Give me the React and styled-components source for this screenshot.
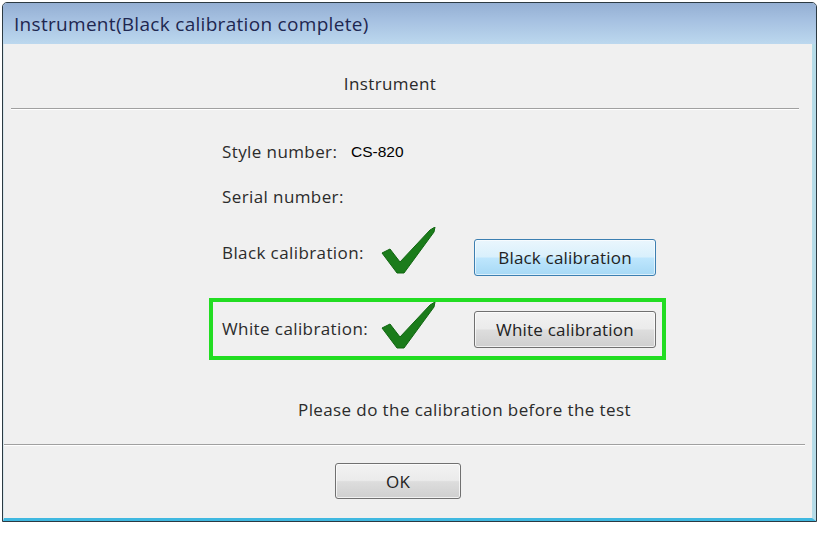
import React from "react";
import styled, { createGlobalStyle } from "styled-components";

const Global = createGlobalStyle`
  html, body { margin: 0; padding: 0; background: #ffffff; }
  body { font-family: "Open Sans", "Liberation Sans", sans-serif; }
`;

const Window = styled.div`
  margin: 2px 0 0 2px;
  width: 815px;
  height: 520px;
  box-sizing: border-box;
  border: 1px solid #2c3a42;
  border-radius: 5px 5px 0 0;
  display: flex;
  flex-direction: column;
  background: #f0f0f0;
  overflow: hidden;
`;

const TitleBar = styled.div`
  height: 41px;
  flex: 0 0 auto;
  background: linear-gradient(to bottom, #94afd3 0%, #a7c2e2 45%, #bcd8ee 100%);
  display: flex;
  align-items: center;
  padding-left: 11px;
  font-size: 19px;
  color: #1e2750;
  letter-spacing: 0.3px;
`;

const Body = styled.div`
  flex: 1;
  display: flex;
  flex-direction: column;
  border-right: 4px solid #b6dce8;
  border-bottom: 3px solid #3fb8e0;
  border-left: 1px solid #d8e6ec;
`;

const Header = styled.div`
  height: 64px;
  box-sizing: border-box;
  padding: 29px 0 0 0;
  text-align: center;
  font-size: 17px;
  letter-spacing: 0.4px;
  line-height: 22px;
  color: #2a2a2a;
  margin-right: 36px;
`;

const Separator = styled.div`
  height: 1px;
  background: #a0a0a0;
  border-bottom: 1px solid #ffffff;
  margin: 0 ${p => p.$right}px 0 ${p => p.$left}px;
`;

const Form = styled.div`
  display: flex;
  flex-direction: column;
  padding-left: 205px;
`;

const Row = styled.div`
  display: flex;
  align-items: flex-start;
  height: ${p => p.$h}px;
  margin-top: ${p => p.$mt}px;
  padding-left: 13px;
`;

const Label = styled.div`
  width: ${p => p.$w || 159}px;
  flex: 0 0 auto;
  margin-top: ${p => p.$mt || 0}px;
  font-size: 17px;
  letter-spacing: 0.4px;
  line-height: 28px;
  color: #2b2b2b;
  white-space: nowrap;
`;

const Value = styled.div`
  font-family: "Liberation Sans", Arial, sans-serif;
  font-size: 15.5px;
  line-height: 28px;
  color: #000;
  margin-left: 12px;
`;

const CheckBox = styled.div`
  width: 93px;
  flex: 0 0 auto;
  margin-top: ${p => p.$mt}px;
  height: 48px;
`;

const Button = styled.button`
  width: ${p => p.$w}px;
  height: ${p => p.$h}px;
  box-sizing: border-box;
  border-radius: 3px;
  font-family: "Open Sans", "Liberation Sans", sans-serif;
  font-size: 17px;
  letter-spacing: 0.2px;
  color: #222;
  padding: 0;
  cursor: default;
  border: 1px solid ${p => (p.$focus ? "#3c7fb1" : "#707070")};
  background: ${p =>
    p.$focus
      ? "linear-gradient(to bottom, #eaf6fd 0%, #d9f0fc 48%, #bee6fd 52%, #a7d9f5 100%)"
      : "linear-gradient(to bottom, #f2f2f2 0%, #ebebeb 48%, #dddddd 52%, #cfcfcf 100%)"};
  box-shadow: inset 0 0 0 1px ${p => (p.$focus ? "rgba(255,255,255,0.6)" : "rgba(255,255,255,0.7)")};
`;

const Highlight = styled.div`
  width: 457px;
  height: 62px;
  box-sizing: border-box;
  border: 4px solid #22dd22;
  margin-top: 22px;
  display: flex;
  align-items: flex-start;
  padding: 9px 0 0 9px;
`;

const Message = styled.div`
  margin: 36px 0 20px 294px;
  font-size: 17px;
  letter-spacing: 0.4px;
  line-height: 28px;
  color: #2b2b2b;
`;

const Footer = styled.div`
  display: flex;
  justify-content: flex-start;
  padding: 17px 0 0 331px;
`;

const Check = () => (
  <svg width="56" height="48" viewBox="0 0 56 48">
    <polygon
      points="1,26 9,22 19,35 49,3 54,0 53,5 23,46 16,46"
      fill="#1b7c1b"
      stroke="#116611"
      strokeWidth="1"
      strokeLinejoin="round"
    />
  </svg>
);

export default function App() {
  return (
    <>
      <Global />
      <Window>
        <TitleBar>Instrument(Black calibration complete)</TitleBar>
        <Body>
          <Header>Instrument</Header>
          <Separator $left={7} $right={13} />
          <Form>
            <Row $h={28} $mt={28}>
              <Label $w={117}>Style number:</Label>
              <Value>CS-820</Value>
            </Row>
            <Row $h={28} $mt={17}>
              <Label>Serial number:</Label>
            </Row>
            <Row $h={37} $mt={28}>
              <Label>Black calibration:</Label>
              <CheckBox $mt={-12}>
                <Check />
              </CheckBox>
              <Button $w={182} $h={37} $focus>Black calibration</Button>
            </Row>
            <Highlight>
              <Label $mt={4}>White calibration:</Label>
              <CheckBox $mt={-9}>
                <Check />
              </CheckBox>
              <Button $w={182} $h={37}>White calibration</Button>
            </Highlight>
          </Form>
          <Message>Please do the calibration before the test</Message>
          <Separator $left={0} $right={7} />
          <Footer>
            <Button $w={126} $h={36}>OK</Button>
          </Footer>
        </Body>
      </Window>
    </>
  );
}
